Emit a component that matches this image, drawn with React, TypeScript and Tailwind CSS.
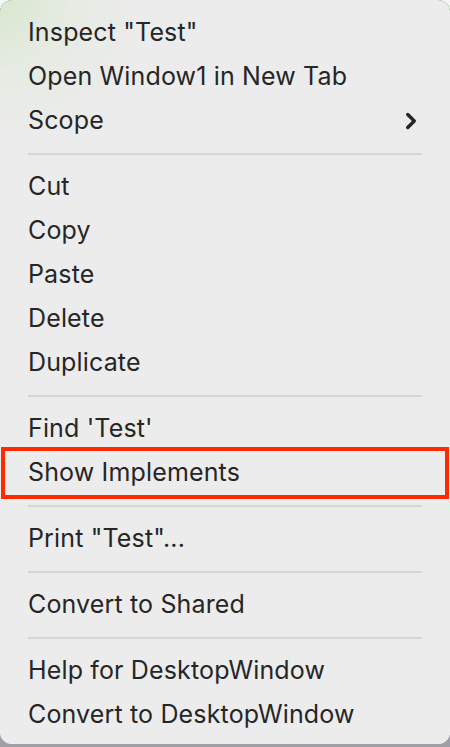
import { ChevronRight } from 'lucide-react';

type Item = { label: string; submenu?: boolean; marked?: boolean } | 'sep';

const items: Item[] = [
  { label: 'Inspect "Test"' },
  { label: 'Open Window1 in New Tab' },
  { label: 'Scope', submenu: true },
  'sep',
  { label: 'Cut' },
  { label: 'Copy' },
  { label: 'Paste' },
  { label: 'Delete' },
  { label: 'Duplicate' },
  'sep',
  { label: "Find 'Test'" },
  { label: 'Show Implements', marked: true },
  'sep',
  { label: 'Print "Test"...' },
  'sep',
  { label: 'Convert to Shared' },
  'sep',
  { label: 'Help for DesktopWindow' },
  { label: 'Convert to DesktopWindow' },
];

export default function App() {
  return (
    <div className="h-[747px] w-[450px] overflow-hidden bg-[linear-gradient(180deg,#f6f6f6_0,#e9e9ea_60%,#9d9ea6_100%)]">
      <div className="relative h-[744px] w-[450px] overflow-hidden rounded-[12px] bg-[linear-gradient(180deg,#5f9e44_0,#5f9e44_14px,#f7f7f7_14px)]">
        <div className="absolute inset-0 rounded-[12px] bg-[#ececec] bg-[radial-gradient(circle_at_0_0,#d8e8cf_0,#e6ebe3_70px,#ececec_150px)]" />
        <ul className="relative pt-[11px] font-['Inter','Noto_Sans',sans-serif] text-[25px] tracking-[0.15px] text-[#262626]">
          {items.map((item, i) =>
            item === 'sep' ? (
              <li key={i} className="flex h-[22px] items-center px-[28px]">
                <div className="h-[2px] w-full bg-[#d6d6d6]" />
              </li>
            ) : (
              <li key={i} className="relative flex h-[44px] items-center justify-between pl-[28px] pr-[26px]">
                <span>{item.label}</span>
                {item.submenu && <ChevronRight className="h-[26px] w-[26px] text-[#262626]" strokeWidth={3.2} />}
                {item.marked && (
                  <div className="absolute -bottom-[4px] -top-[4px] left-[1px] right-[1px] border-[4px] border-[#ff2a00]" />
                )}
              </li>
            ),
          )}
        </ul>
      </div>
    </div>
  );
}
